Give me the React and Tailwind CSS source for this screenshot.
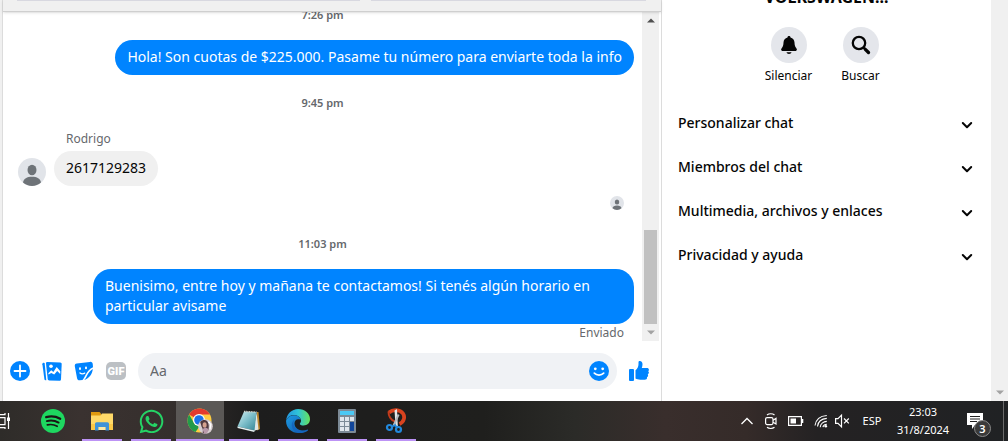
import React from "react";
import { FaWhatsapp } from "react-icons/fa";

function Avatar({ className }) {
  return (
    <svg viewBox="0 0 28 28" className={className} aria-hidden="true">
      <circle cx="14" cy="14" r="14" fill="#e1e4e9" />
      <ellipse cx="14" cy="12" rx="4.5" ry="5.2" fill="#6e7378" />
      <path d="M5 24.6C5.500 20.600 9 18.800 14 18.800s8.500 1.800 9 5.800A14 14 0 0 1 14 28a14 14 0 0 1-9-3.400z" fill="#6e7378" />
    </svg>
  );
}

function TimeStamp({ children }) {
  return <p className="text-center text-[11px] leading-4 font-semibold text-[#65686c]">{children}</p>;
}

function ScrollArrow({ up, className }) {
  return (
    <svg viewBox="0 0 8 5" className={`h-[5px] w-2 ${className}`} aria-hidden="true">
      <path d={up ? "M0 4.500 4 .5l4 4z" : "M0 .5h8l-4 4z"} fill="currentColor" />
    </svg>
  );
}

function SentBubble({ children }) {
  return (
    <div className="flex justify-end pr-2">
      <p className="max-w-[541px] rounded-[18px] bg-[#0084ff] px-3 pt-[7px] pb-2 text-[14px] leading-5 text-white">
        {children}
      </p>
    </div>
  );
}

function Conversation() {
  return (
    <div className="flex flex-1 pr-[2px]">
      <div className="min-w-0 flex-1">
        <div className="flex h-[11px] items-end justify-center overflow-hidden">
          <TimeStamp>7:26 pm</TimeStamp>
        </div>
        <div className="pt-[17px]">
          <SentBubble>Hola! Son cuotas de $225.000. Pasame tu número para enviarte toda la info</SentBubble>
        </div>
        <div className="pt-5">
          <TimeStamp>9:45 pm</TimeStamp>
        </div>
        <div className="flex items-end gap-2 pt-5 pl-[15px]">
          <Avatar className="size-7 shrink-0" />
          <div>
            <p className="pb-1 pl-3 text-[12px] leading-4 text-[#65686c]">Rodrigo</p>
            <p className="rounded-[18px] bg-[#f0f0f0] px-3 pt-[7px] pb-2 text-[14px] leading-5 text-[#050505]">2617129283</p>
          </div>
        </div>
        <div className="flex justify-end pt-[10px] pr-[18px]">
          <Avatar className="size-[14px]" />
        </div>
        <div className="pt-[26px] pb-[17px]">
          <TimeStamp>11:03 pm</TimeStamp>
        </div>
        <SentBubble>
          Buenisimo, entre hoy y mañana te contactamos! Si tenés algún horario en particular avisame
        </SentBubble>
        <p className="pr-[18px] text-right text-[12px] leading-[17px] text-[#65686c]">Enviado</p>
      </div>
      <div className="flex w-[17px] shrink-0 flex-col items-center bg-[#f0f0f0]">
        <ScrollArrow up className="mt-[6px] text-[#505050]" />
        <div className="flex-1" />
        <div className="h-[94px] w-[13px] bg-[#c1c1c1]" />
        <ScrollArrow className="my-[6px] text-[#a3a3a3]" />
      </div>
    </div>
  );
}

function Composer() {
  return (
    <form className="flex items-center py-3 pr-3 pl-[7px]" onSubmit={(e) => e.preventDefault()}>
      <div className="flex gap-3 pr-3">
        <button type="button" aria-label="Más acciones" className="size-5">
          <svg viewBox="0 0 20 20" className="size-5">
            <circle cx="10" cy="10" r="10" fill="#0084ff" />
            <path d="M10 4.500v11M4.500 10h11" stroke="#fff" strokeWidth="1.800" strokeLinecap="round" />
          </svg>
        </button>
        <button type="button" aria-label="Adjuntar foto" className="size-5">
          <svg viewBox="0 0 20 20" className="size-5">
            <path d="M.8 2.200c.6-.6 1.700-.6 1.900.3l1.600 16.700c-1 .3-1.700 0-1.900-.9L.4 3.300z" fill="#0084ff" />
            <path d="M5.300.9 18.200 1.400c1 .1 1.500.7 1.500 1.700l-.7 15.200c-.1 1-.7 1.500-1.700 1.500l-10-.4c-1-.1-1.500-.6-1.600-1.500L4 2.500C3.900 1.400 4.400.9 5.300.9z" fill="#0084ff" />
            <circle cx="9" cy="5.300" r="1.800" fill="#fff" />
            <path d="m6.300 12.300 2.900-3 2.200 1.600 3.300-4.900 3.600 4.200-.1 2.700-3-2.900-3 3.500-2.900-1.600-2.800 1.700z" fill="#fff" />
          </svg>
        </button>
        <button type="button" aria-label="Elegir un sticker" className="size-5">
          <svg viewBox="0 0 20 20" className="size-5">
            <path d="M2.800 2.400 15.800.9c1.900-.2 2.900.7 3 2.600l.2 2.700c-3.300 1.600-5.500 4.100-7.200 7.200-.8 1.600-2 3.800-3.300 5.500l-2.600.4c-1.600.2-2.600-.6-2.900-2.300L.8 5.200c-.2-1.600.5-2.600 2-2.800z" fill="#0084ff" />
            <path d="M18.800 7.900c-.4 5-3.500 9-8.500 11.100 1.200-1.400 2-3 2.800-4.600 1.400-2.800 3.200-5 5.700-6.500z" fill="#0084ff" />
            <ellipse cx="6" cy="7.700" rx="1" ry="1.400" fill="#fff" />
            <ellipse cx="12" cy="6.900" rx="1" ry="1.400" fill="#fff" />
            <path d="M6 11.900c1.300 1.100 3 1.200 4.700.2" fill="none" stroke="#fff" strokeWidth="1.300" strokeLinecap="round" />
          </svg>
        </button>
        <button type="button" aria-label="Elegir un GIF" className="flex h-5 w-5 items-center">
          <span className="flex h-[18px] w-5 items-center justify-center rounded-[5px] bg-[#bcc0c4] font-['Roboto',sans-serif] text-[11px] leading-none font-black text-white">
            GIF
          </span>
        </button>
      </div>
      <div className="flex h-9 min-w-0 flex-1 items-center rounded-full bg-[#f0f2f5] pr-2 pl-3">
        <input
          aria-label="Mensaje"
          placeholder="Aa"
          className="min-w-0 flex-1 bg-transparent text-[14px] leading-5 outline-none placeholder:text-[#65686c]"
        />
        <button type="button" aria-label="Elegir un emoji" className="size-5">
          <svg viewBox="0 0 20 20" className="size-5">
            <circle cx="10" cy="10" r="10" fill="#0084ff" />
            <circle cx="6.300" cy="7.800" r="1.400" fill="#fff" />
            <circle cx="13.700" cy="7.800" r="1.400" fill="#fff" />
            <path d="M5.300 12.200c2.500 2.500 6.900 2.500 9.400 0" fill="none" stroke="#fff" strokeWidth="1.700" strokeLinecap="round" />
          </svg>
        </button>
      </div>
      <button type="button" aria-label="Enviar Me gusta" className="ml-3 size-5">
        <svg viewBox="0 0 20 20" className="size-5" fill="#0084ff">
          <rect x="0" y="8" width="5" height="12" rx="1" />
          <path d="M6.500 9.200c2-1.700 3-3.500 3-6.200V1.400c0-.9.500-1.400 1.300-1.400 1.800 0 2.700 1.400 2.700 3.300 0 1.400-.3 2.600-.7 3.700h5.100c1.200 0 2 .7 2 1.700 0 .7-.3 1.200-.8 1.500.5.300.8.800.8 1.400 0 .9-.5 1.500-1.200 1.700.3.300.4.600.4 1.100 0 .8-.5 1.400-1.200 1.600.1.300.2.500.2.800 0 1.300-.9 2-2.400 2h-4.400c-2 0-3.600-.5-4.800-1.200z" />
        </svg>
      </button>
    </form>
  );
}

function RoundAction({ label, children }) {
  return (
    <button type="button" className="flex w-[72px] flex-col items-center gap-[5px] text-[12px] leading-4 text-[#050505]">
      <span className="flex size-9 items-center justify-center rounded-full bg-[#e4e6eb]">{children}</span>
      {label}
    </button>
  );
}

const sections = ["Personalizar chat", "Miembros del chat", "Multimedia, archivos y enlaces", "Privacidad y ayuda"];

function Details() {
  return (
    <aside className="w-[330px] shrink-0 border-l border-[#dcdcdc]">
      <div className="flex h-[5px] items-end justify-center overflow-hidden">
        <h2 className="text-[16px] leading-4 font-bold text-[#050505]">VOLKSWAGEN...</h2>
      </div>
      <div className="flex justify-center pt-[22px] pr-1 pb-[17px]">
        <RoundAction label="Silenciar">
          <svg viewBox="0 0 20 20" className="size-5" fill="#050505">
            <path d="M10 1c.9 0 1.500.6 1.500 1.400 2.400.6 3.900 2.500 4 5.100.1 2.600.5 3.900 1.500 5.200.5.700.9 1.300.9 1.900 0 .9-.7 1.500-1.700 1.500H3.800c-1 0-1.700-.6-1.700-1.500 0-.6.400-1.200.9-1.900 1-1.300 1.400-2.600 1.500-5.200.1-2.600 1.600-4.500 4-5.100C8.500 1.600 9.100 1 10 1zM7.500 17.300h5c-.3 1-1.200 1.700-2.500 1.700s-2.200-.7-2.500-1.700z" />
          </svg>
        </RoundAction>
        <RoundAction label="Buscar">
          <svg viewBox="0 0 20 20" className="size-5" fill="none" stroke="#050505" strokeLinecap="round">
            <circle cx="8" cy="8" r="6.200" strokeWidth="2.300" />
            <path d="m12.700 12.700 1.300 1.300" strokeWidth="2.300" />
            <path d="m14.300 14.300 3.200 3.200" strokeWidth="3.300" />
          </svg>
        </RoundAction>
      </div>
      {sections.map((name) => (
        <button
          key={name}
          type="button"
          className="flex h-11 w-full items-center justify-between pr-[18px] pl-4 text-left text-[14px] leading-5 font-medium text-[#050505]"
        >
          {name}
          <svg viewBox="0 0 12 12" className="mt-[3px] size-3" fill="none" stroke="#050505" strokeWidth="2" strokeLinecap="round" strokeLinejoin="round" aria-hidden="true">
            <path d="m1.800 4 4.200 4.200L10.200 4" />
          </svg>
        </button>
      ))}
    </aside>
  );
}

function Spotify() {
  return (
    <svg viewBox="0 0 24 24" className="size-6" fill="none" stroke="#191414" strokeLinecap="round">
      <circle cx="12" cy="12" r="12" fill="#1ed760" stroke="none" />
      <path d="M5.200 8.100c4.800-1.300 9.700-.8 14 1.600" strokeWidth="2.300" />
      <path d="M5.800 12.100c4-1.100 8.200-.6 11.800 1.500" strokeWidth="1.900" />
      <path d="M6.300 15.900c3.500-.8 6.900-.4 9.900 1.400" strokeWidth="1.600" />
    </svg>
  );
}

function Folder() {
  return (
    <svg viewBox="0 0 24 24" className="size-6">
      <path d="M1 3h8.500L11 4.500V8H1z" fill="#e09a10" />
      <path d="M1 6.500h9.500L12 4.500h11v16H1z" fill="#ffd968" />
      <path d="M1 15h22v6H1z" fill="#fbc847" />
      <path d="M5 21.500V15c0-1 .6-1.700 1.700-1.700h10.600c1.100 0 1.700.7 1.700 1.700v6.500h-3.600V18H8.600v3.500z" fill="#3f93d8" />
      <path d="M8.600 18h6.800v3H8.600z" fill="#fdeaa8" />
    </svg>
  );
}

function Chrome() {
  return (
    <svg viewBox="0 0 26 26" className="size-[26px]">
      <circle cx="12.500" cy="12.500" r="12" fill="#ffcd40" />
      <path d="M22.900 6.500H12.500L7.300 9.500 2.100 6.500A12 12 0 0 1 22.900 6.500z" fill="#e33b2e" />
      <path d="M2.100 6.500 7.300 15.500l5.200 3-4 5.400A12 12 0 0 1 2.100 6.500z" fill="#229a4b" />
      <circle cx="12" cy="12" r="6" fill="#fff" />
      <circle cx="12" cy="12" r="4.800" fill="#1a73e8" />
      <circle cx="18.500" cy="18.500" r="7.300" fill="#d8cdd0" />
      <path d="M13.200 14c2-2.400 5.600-2.600 7.200-.4 1.600 2.300 1.600 5.400 1 8.600l-3 3.300-2.800-.8c.8-2.300.1-4.300-1-6z" fill="#503a40" />
      <ellipse cx="17.600" cy="17" rx="2" ry="2.800" fill="#d5a18f" />
      <path d="m15.500 21 3-1.500 3 1.500-1.300 4-3 .7z" fill="#b99aab" />
      <path d="m21.500 13.800 2.300 2.600-.8 5" fill="none" stroke="#fff" strokeWidth="1.300" />
    </svg>
  );
}

function Notepad() {
  return (
    <svg viewBox="0 0 26 26" className="size-[26px]">
      <defs>
        <linearGradient id="notepad-page" x1="0" y1="0" x2="1" y2="1">
          <stop offset="0" stopColor="#d4f0f3" />
          <stop offset=".5" stopColor="#7bbdc9" />
          <stop offset="1" stopColor="#328494" />
        </linearGradient>
      </defs>
      <path d="M21 4h1.500L24 21l-3 1.500z" fill="#b9852f" />
      <path d="M20.500 4 22.500 21.500l-5 1.500z" fill="#dfe7e6" />
      <path d="M8 3.500 20.500 4l-2 18.500L1.500 18.500z" fill="url(#notepad-page)" />
      <path d="M1.500 18.500l17 4-.2 1.500L1.600 20z" fill="#e7f2f2" />
      <path d="M8 3.500 20.500 4" stroke="#d3d3cc" strokeWidth="1.500" strokeDasharray="1 .7" />
    </svg>
  );
}

function Edge() {
  return (
    <svg viewBox="0 0 24 24" className="size-6">
      <defs>
        <linearGradient id="edge-top" x1="0" y1=".5" x2="1" y2=".5">
          <stop offset="0" stopColor="#2294df" />
          <stop offset=".5" stopColor="#2fc4d8" />
          <stop offset="1" stopColor="#66e35b" />
        </linearGradient>
        <linearGradient id="edge-side" x1="0" y1="0" x2="1" y2="1">
          <stop offset="0" stopColor="#1c9be4" />
          <stop offset="1" stopColor="#1256a8" />
        </linearGradient>
      </defs>
      <path d="M.1 11.500C2 7.300 6 5.700 9.500 6.300c3.200.5 5 2.500 5 4.500-4-1.500-6.300 1.200-6 4.200.4 4.500 5.200 7.200 10.200 6.400 1.200-.2 2.100-.5 2.900-.9C19.400 22.900 16 24 12.500 24 5.500 24-.3 18.500.1 11.500z" fill="url(#edge-side)" />
      <path d="M.1 11.500C.6 5 5.700 0 12.200 0 19 0 24 4.500 24 10.200c0 3.800-2.800 6.200-6.400 6.200-2.300 0-3.800-.7-3.800-1.500 0-.6 1.200-1.300 1.200-3.200 0-3.300-3-5.800-7.100-5.800-3.400 0-6.400 2-7.800 5.600z" fill="url(#edge-top)" />
      <path d="M9.200 10.200c-2.600 2.200-2.200 6.400.4 9 2.700 2.600 7.600 3.200 11.600 1.500.7-.3 1.100.3.700.8-1.900 1.900-5.400 2.700-8.400 2.300-5.100-.7-8-4.400-7.700-8.200.2-2.500 1.300-4.400 3.400-5.400z" fill="#1566bd" />
    </svg>
  );
}

function Calculator() {
  return (
    <svg viewBox="0 0 18 24" className="h-6 w-[18px]">
      <rect width="18" height="24" rx="1" fill="#7c8a96" />
      <rect x="2" y="2" width="14" height="4" fill="#4cc9f4" />
      {[8, 13, 18].map((y) =>
        [2, 7, 12].map((x) => <rect key={`${x}-${y}`} x={x} y={y} width="4" height="4" fill="#e0e6ec" />)
      )}
      <rect x="12" y="13" width="4" height="9" fill="#12469a" />
    </svg>
  );
}

function Snip() {
  return (
    <svg viewBox="0 0 22 26" className="h-[26px] w-[22px]" fill="none">
      <path d="M4 4.500C8 1 15 1.200 18 5.500c2.300 3.500 1 8.500-3.500 10.500" stroke="#d8431f" strokeWidth="3.800" />
      <path d="M3.500 3.500C3.500 8.500 6 12 10 13.500" stroke="#c23a1b" strokeWidth="2" />
      <path d="m9.500 2.500 2.500-1.500.8 17h-2.300z" fill="#e3e6e8" />
      <path d="m14.500 7-5 11-1.800-1 5-11z" fill="#b4bac0" />
      <circle cx="4.500" cy="19.500" r="2.500" stroke="#2389dc" strokeWidth="2.200" />
      <circle cx="13.500" cy="21.500" r="2.500" stroke="#2389dc" strokeWidth="2.200" />
      <path d="m7 18.500 3-1.300 2.300 2.600" stroke="#2389dc" strokeWidth="1.800" />
    </svg>
  );
}

const apps = [
  { name: "Spotify", icon: <Spotify />, open: false },
  { name: "Explorador de archivos", icon: <Folder />, open: true },
  { name: "WhatsApp", icon: <FaWhatsapp className="size-[27px] text-[#25d366]" />, open: true },
  { name: "Google Chrome", icon: <Chrome />, open: true, active: true },
  { name: "Bloc de notas", icon: <Notepad />, open: true },
  { name: "Microsoft Edge", icon: <Edge />, open: true },
  { name: "Calculadora", icon: <Calculator />, open: true },
  { name: "Recortes", icon: <Snip />, open: true },
];

function Tray() {
  return (
    <div className="flex items-center text-white">
      <div className="flex items-center gap-[10px]">
        <button type="button" aria-label="Mostrar iconos ocultos">
          <svg viewBox="0 0 14 16" className="h-4 w-[14px]" fill="none" stroke="currentColor" strokeWidth="1.300">
            <path d="m1.500 11 5.500-5.500 5.500 5.500" />
          </svg>
        </button>
        <button type="button" aria-label="Reunirse ahora">
          <svg viewBox="0 0 14 18" className="h-[18px] w-[14px]" fill="none" stroke="currentColor" strokeWidth="1.200">
            <rect x="1.600" y="5.600" width="7.400" height="7" rx="1.500" />
            <path d="m9 8.200 3-1.800v5.600L9 10.200M3 3c2-1.700 5.500-1.700 7.500 0M3 15.200c2 1.700 5.500 1.700 7.500 0" />
          </svg>
        </button>
        <button type="button" aria-label="Batería">
          <svg viewBox="0 0 16 16" className="size-4" fill="none" stroke="currentColor" strokeWidth="1.200">
            <path d="M.6 3.600h12.800v8.800H.6z" />
            <path d="M14.500 6v4" strokeWidth="1.600" />
            <path d="M2.500 5.500H8v5H2.500z" fill="currentColor" stroke="none" />
          </svg>
        </button>
        <button type="button" aria-label="Red">
          <svg viewBox="0 0 14 16" className="h-4 w-[14px]" fill="none" stroke="currentColor" strokeWidth="1.100">
            <path d="M1 12.500C1.800 7 6 3 12.800 2.500M3.500 13.500C4 9 7.500 5.700 12.800 5.400M6.200 14.200c.3-3.300 3-5.700 6.600-5.800M8.900 14.200c.3-1.700 1.600-2.900 3.900-3" />
            <circle cx="11.800" cy="13.200" r="1.300" fill="currentColor" stroke="none" />
          </svg>
        </button>
        <button type="button" aria-label="Volumen" className="-ml-1">
          <svg viewBox="0 0 16 16" className="size-4" fill="none" stroke="currentColor" strokeWidth="1.200">
            <path d="M1.600 5.600H4l3.500-3.500v11.800L4 10.400H1.600z" />
            <path d="m10 5.500 4.800 4.800m0-4.800L10 10.300" />
          </svg>
        </button>
      </div>
      <button type="button" className="w-11 text-center text-[11px] leading-4">
        ESP
      </button>
      <div className="w-[58px] text-center text-[11px] leading-[18px]">
        <p>23:03</p>
        <p>31/8/2024</p>
      </div>
      <button type="button" aria-label="Notificaciones" className="relative mr-4 ml-[15px] flex h-10 w-5 items-center">
        <svg viewBox="0 0 16 17" className="h-[17px] w-4" aria-hidden="true">
          <path d="M0 0h16v12h-8l-3 4v-4H0z" fill="#fff" />
          <path d="M3 3.500h10M3 6h10M3 8.500h7" stroke="#222" strokeWidth="1" />
        </svg>
        <span className="absolute right-[-4px] bottom-1 flex size-[17px] items-center justify-center rounded-full border border-[#8a8a8a] bg-[#3a3a3a] text-[11px] leading-none font-semibold">
          3
        </span>
      </button>
      <div className="mr-1 h-10 w-px bg-[#6a6a6a]" />
    </div>
  );
}

function Taskbar() {
  return (
    <footer className="flex h-10 shrink-0 justify-between bg-[linear-gradient(to_right,#2e2c29_0%,#3a3230_8%,#352f2d_17%,#1d1d1d_25%,#1f1f1d_48%,#2b2b28_57%,#392e2c_66%,#352b29_74%,#242223_81%,#202224_100%)]">
      <div className="flex gap-px">
        <button type="button" aria-label="Vista de tareas" className="flex w-7 items-center">
          <svg viewBox="0 0 11 18" className="h-[18px] w-[11px]" fill="none" stroke="#fff" strokeWidth="1.200">
            <path d="M0 5.600h5v7H0M0 2.600h5V1M0 15.600h5V17M8.500 1v16" />
            <path d="M8.500 5.500v3.500" strokeWidth="3" />
          </svg>
        </button>
        {apps.map((app) => (
          <button
            key={app.name}
            type="button"
            aria-label={app.name}
            className={`relative flex w-12 items-center justify-center ${app.active ? "bg-[#5b5856]" : ""}`}
          >
            {app.icon}
            {app.open && (
              <span className={`absolute bottom-0 h-[2px] bg-[#bd93f5] ${app.active ? "inset-x-0" : "inset-x-1"}`} />
            )}
          </button>
        ))}
      </div>
      <Tray />
    </footer>
  );
}

export default function App() {
  return (
    <div className="flex min-h-screen flex-col bg-white font-['Noto_Sans','Open_Sans',sans-serif]">
      <main className="flex flex-1">
        <div className="w-[3px] shrink-0 border-r border-[#dcdcdc] bg-[#f0f0f0]" />
        <section className="flex min-w-0 flex-1 flex-col">
          <div className="z-10 flex h-3 gap-[11px] border-b border-[#cfcfcf] bg-[#f0f0f0] pr-[15px] pl-[14px] shadow-sm">
            <div className="h-px flex-[5] bg-[#d8d8e0]" />
            <div className="h-px flex-[4] bg-[#d8d8e0]" />
          </div>
          <Conversation />
          <Composer />
        </section>
        <Details />
        <div className="flex w-[17px] shrink-0 flex-col items-center justify-end bg-[#f0f0f0]">
          <ScrollArrow className="mb-[6px] text-[#a3a3a3]" />
        </div>
      </main>
      <Taskbar />
    </div>
  );
}
